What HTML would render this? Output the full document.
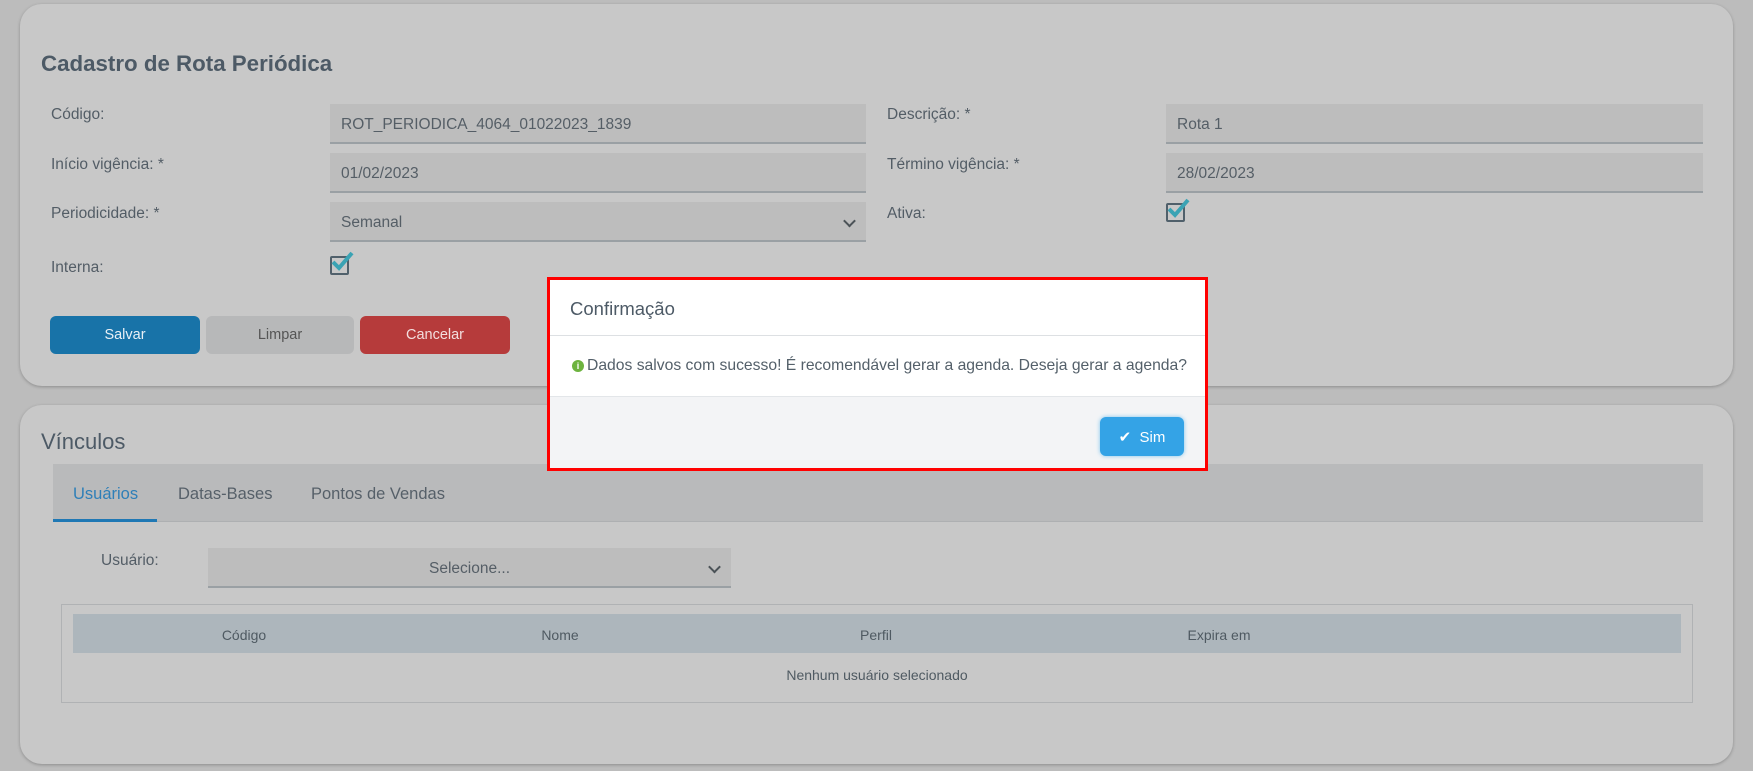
<!DOCTYPE html>
<html><head><meta charset="utf-8"><style>
*{margin:0;padding:0;box-sizing:border-box}
body{width:1753px;height:771px;background:#bcbcbc;font-family:"Liberation Sans",sans-serif;position:relative;overflow:hidden;color:#4e5a63}
.card{position:absolute;left:20px;width:1713px;background:#c8c8c8;border-radius:22px;box-shadow:0 1px 3px rgba(0,0,0,.25)}
.a{position:absolute}
.lbl{font-size:15.5px;color:#535d66}
.inp{position:absolute;background:#bdbdbd;border-bottom:2px solid #9aa0a4;font-size:15.5px;color:#555e66;padding-left:11px;padding-top:4px;display:flex;align-items:center}
.chev{position:absolute;right:12px;top:50%;width:9px;height:9px;border-right:2px solid #4b5257;border-bottom:2px solid #4b5257;transform:translateY(-50%) rotate(45deg)}
.btn{position:absolute;top:316px;height:38px;width:150px;border-radius:6px;display:flex;align-items:center;justify-content:center;font-size:14.5px}
.cb{position:absolute;width:19px;height:19px;border:2px solid #50606b;border-radius:2px}
.cb svg{position:absolute;left:-2px;top:-8px}
</style></head><body>
<div class="card" style="top:4px;height:382px"></div>
<div class="a" style="left:41px;top:51px;font-size:22.3px;font-weight:bold;color:#4d5a66">Cadastro de Rota Periódica</div>

<div class="a lbl" style="left:51px;top:106px">Código:</div>
<div class="inp" style="left:330px;top:104px;width:536px;height:40px">ROT_PERIODICA_4064_01022023_1839</div>
<div class="a lbl" style="left:51px;top:156px">Início vigência: *</div>
<div class="inp" style="left:330px;top:153px;width:536px;height:40px">01/02/2023</div>
<div class="a lbl" style="left:51px;top:205px">Periodicidade: *</div>
<div class="inp" style="left:330px;top:202px;width:536px;height:40px">Semanal<span class="chev"></span></div>
<div class="a lbl" style="left:51px;top:259px">Interna:</div>
<div class="cb" style="left:330px;top:256px"><svg width="26" height="24" viewBox="0 0 26 24"><path d="M3 12 L9 18 L22 3" stroke="#3aa3b4" stroke-width="4" fill="none"/></svg></div>

<div class="a lbl" style="left:887px;top:106px">Descrição: *</div>
<div class="inp" style="left:1166px;top:104px;width:537px;height:40px">Rota 1</div>
<div class="a lbl" style="left:887px;top:156px">Término vigência: *</div>
<div class="inp" style="left:1166px;top:153px;width:537px;height:40px">28/02/2023</div>
<div class="a lbl" style="left:887px;top:205px">Ativa:</div>
<div class="cb" style="left:1166px;top:203px"><svg width="26" height="24" viewBox="0 0 26 24"><path d="M3 12 L9 18 L22 3" stroke="#3aa3b4" stroke-width="4" fill="none"/></svg></div>

<div class="btn" style="left:50px;background:#1873a8;color:#e8f0f6">Salvar</div>
<div class="btn" style="left:206px;width:148px;background:#b7b8b9;color:#555">Limpar</div>
<div class="btn" style="left:360px;background:#b63b3b;color:#f3dede">Cancelar</div>

<div class="card" style="top:405px;height:359px"></div>
<div class="a" style="left:41px;top:429px;font-size:22px;color:#4d5a66">Vínculos</div>
<div class="a" style="left:53px;top:464px;width:1650px;height:58px;background:#b9babb;border-bottom:1px solid #aeb0b2"></div>
<div class="a" style="left:73px;top:485px;font-size:16.5px;color:#2e7fb8">Usuários</div>
<div class="a" style="left:53px;top:519px;width:104px;height:3px;background:#1f78b4"></div>
<div class="a" style="left:178px;top:485px;font-size:16.5px;color:#566069">Datas-Bases</div>
<div class="a" style="left:311px;top:485px;font-size:16.5px;color:#566069">Pontos de Vendas</div>

<div class="a lbl" style="left:101px;top:552px">Usuário:</div>
<div class="inp" style="left:208px;top:548px;width:523px;height:40px;justify-content:center;padding:4px 0 0">Selecione...<span class="chev"></span></div>

<div class="a" style="left:61px;top:604px;width:1632px;height:99px;border:1px solid #b0b2b4"></div>
<div class="a" style="left:73px;top:614px;width:1608px;height:39px;background:#adb6bc"></div>
<div class="a" style="left:244px;top:627px;font-size:14px;transform:translateX(-50%);color:#4f5a62">Código</div>
<div class="a" style="left:560px;top:627px;font-size:14px;transform:translateX(-50%);color:#4f5a62">Nome</div>
<div class="a" style="left:876px;top:627px;font-size:14px;transform:translateX(-50%);color:#4f5a62">Perfil</div>
<div class="a" style="left:1219px;top:627px;font-size:14px;transform:translateX(-50%);color:#4f5a62">Expira em</div>
<div class="a" style="left:877px;top:667px;font-size:14px;transform:translateX(-50%);color:#4f5a62">Nenhum usuário selecionado</div>

<div class="a" style="left:547px;top:277px;width:661px;height:194px;border:3px solid #f00;background:#fff">
  <div class="a" style="left:0;top:0;width:655px;height:56px;border-bottom:1px solid #dde0e3"></div>
  <div class="a" style="left:20px;top:18px;font-size:18.5px;color:#4d5a66">Confirmação</div>
  <div class="a" style="left:22px;top:80px;width:12px;height:12px;border-radius:50%;background:#6db33f;color:#fff;font-size:9px;font-weight:bold;text-align:center;line-height:12px">i</div>
  <div class="a" style="left:37px;top:77px;font-size:15.7px;color:#54606a">Dados salvos com sucesso! É recomendável gerar a agenda. Deseja gerar a agenda?</div>
  <div class="a" style="left:0;top:116px;width:655px;height:72px;background:#f3f4f6;border-top:1px solid #e3e6e9"></div>
  <div class="a" style="left:550px;top:137px;width:84px;height:39px;border-radius:6px;background:#34a3e6;box-shadow:0 0 4px #7cc4ee;color:#fff;font-size:15px;display:flex;align-items:center;justify-content:center">&#10004;&nbsp;&nbsp;Sim</div>
</div>
</body></html>
